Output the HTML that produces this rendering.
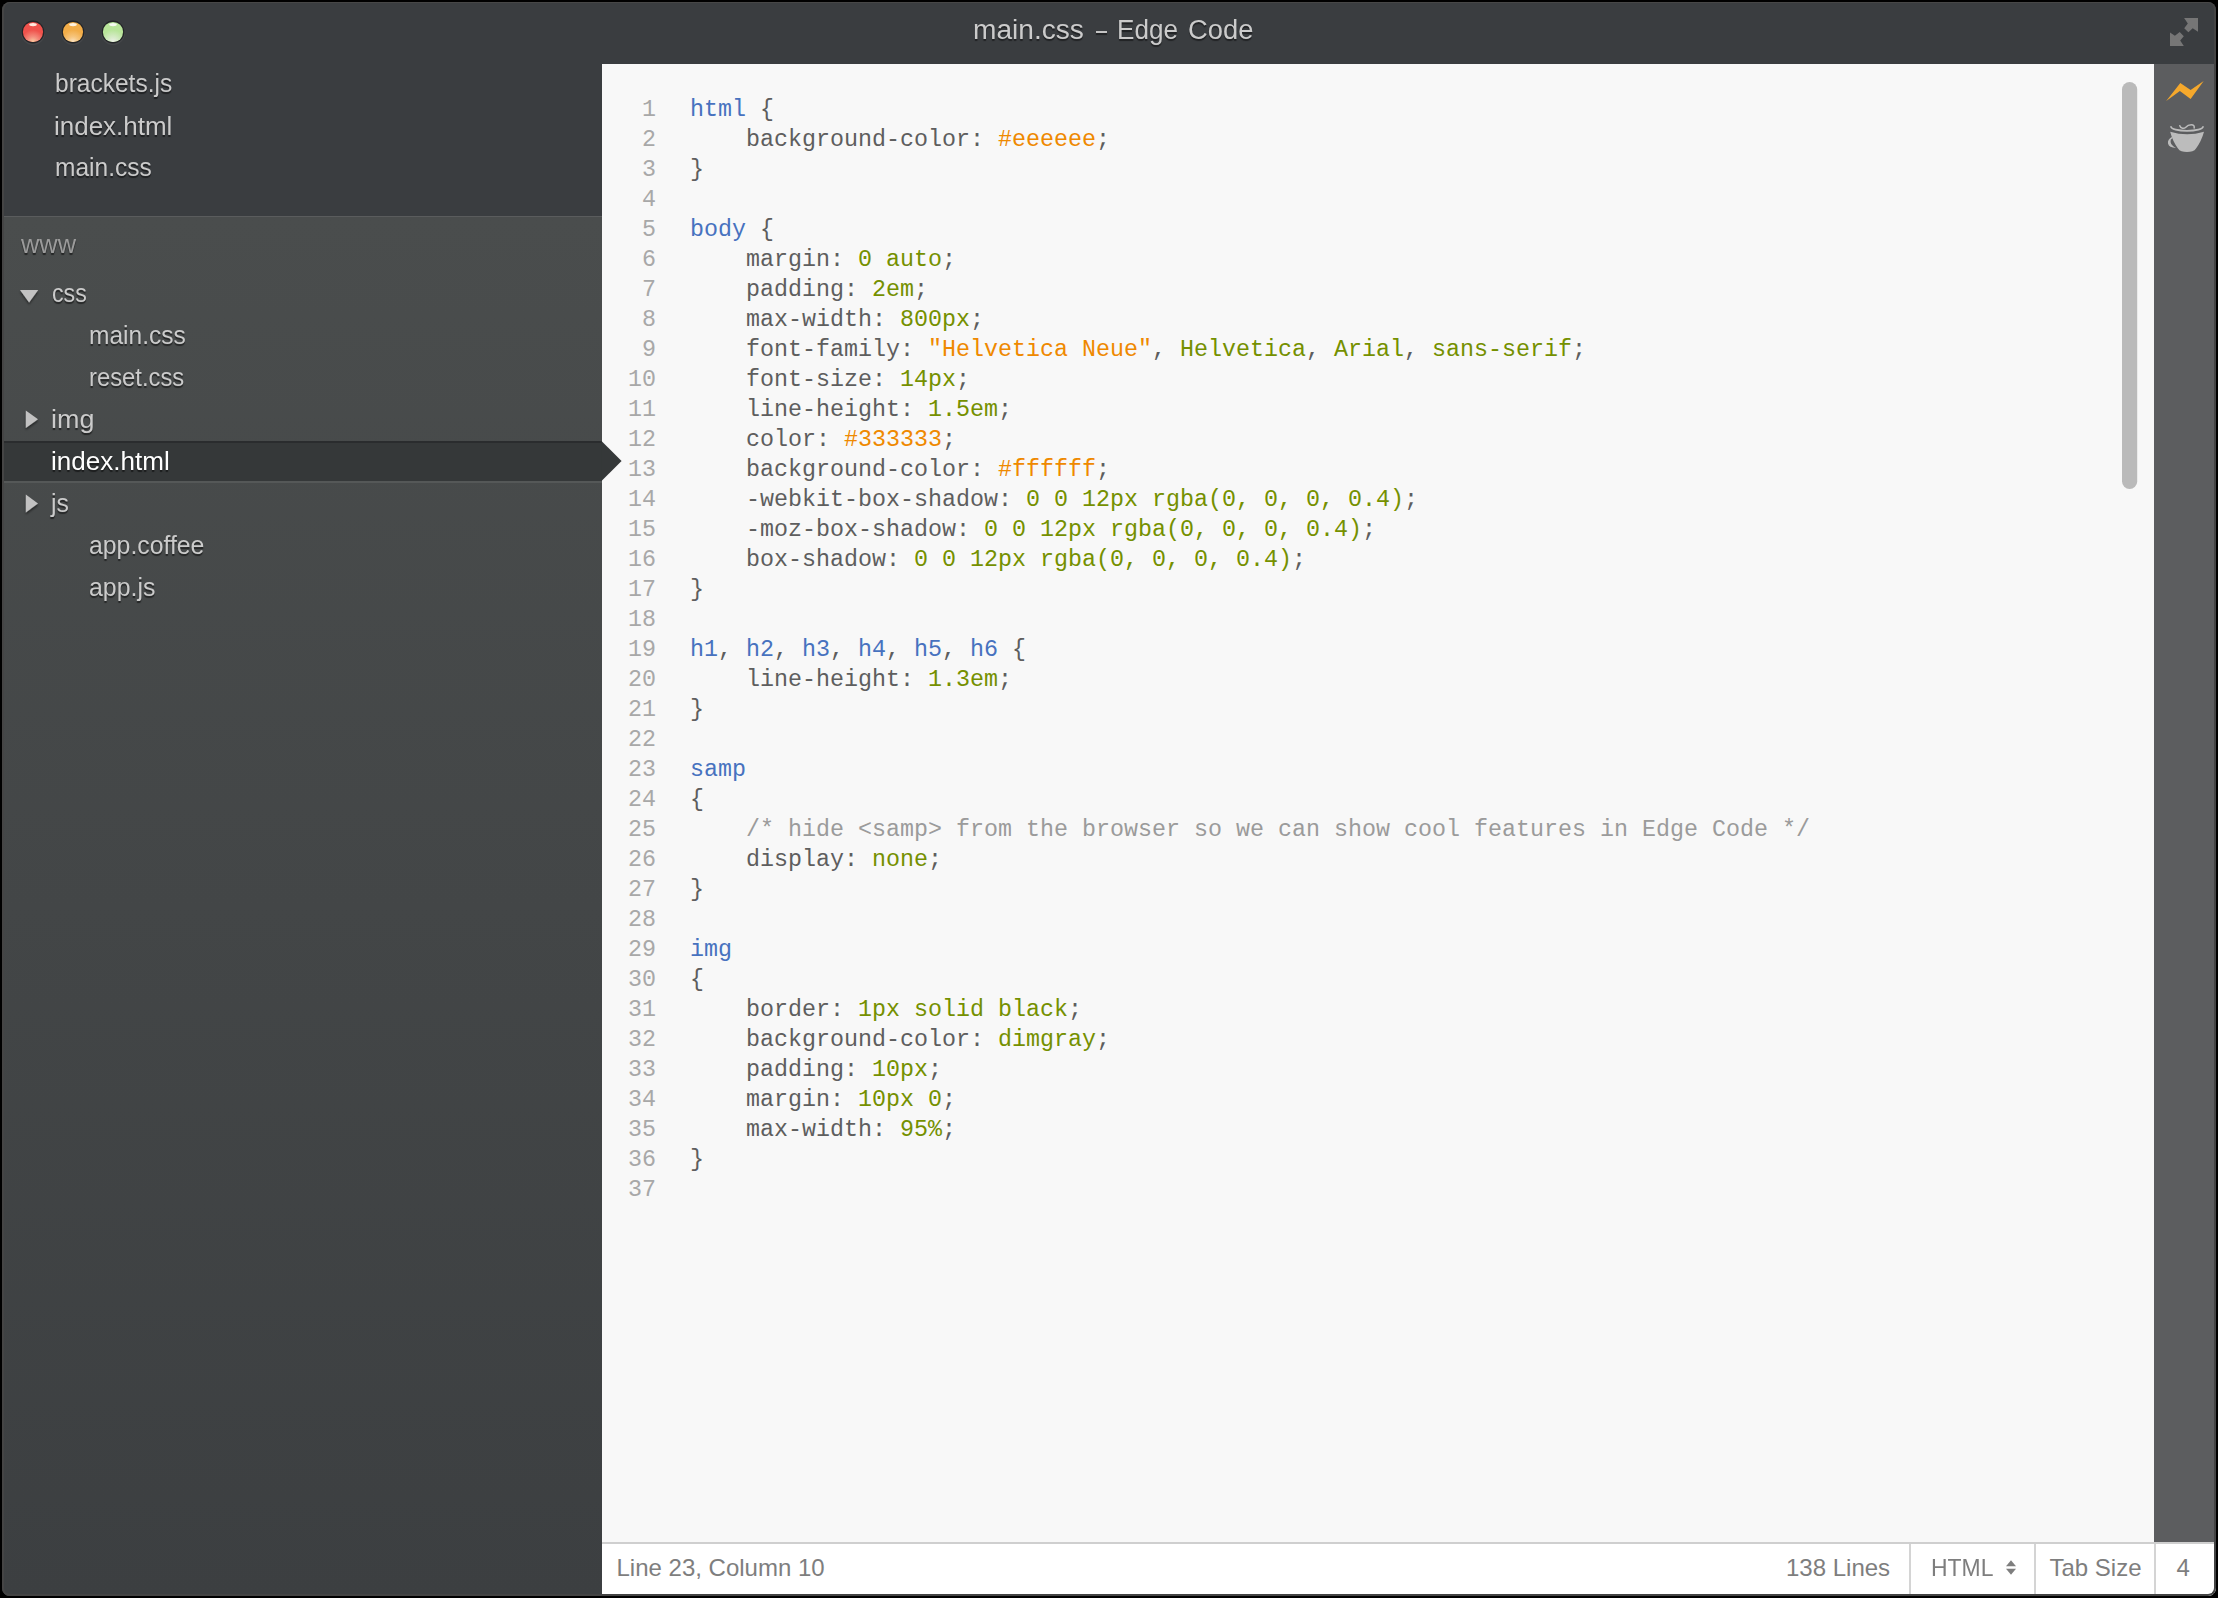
<!DOCTYPE html>
<html><head><meta charset="utf-8">
<style>
html,body{margin:0;padding:0;width:2218px;height:1598px;overflow:hidden;background:#000;position:relative;}
*{box-sizing:border-box;}
.a{position:absolute;}
#win{position:absolute;left:2px;top:2px;width:2214px;height:1594px;border-radius:8px;overflow:hidden;background:#3a3d40;}
#tree{position:absolute;left:0;top:214px;width:600px;height:1380px;background:linear-gradient(#4a4d4d,#3c3f41);border-top:1px solid #5a5c5d;}
.tt{position:absolute;top:14.7px;font-family:"Liberation Sans",sans-serif;font-size:27px;line-height:30px;color:#cbcbcb;text-shadow:0 2px 1px rgba(0,0,0,.45);white-space:nowrap;transform-origin:0 0;}
.si{position:absolute;font-family:"Liberation Sans",sans-serif;font-size:26px;line-height:30px;height:30px;color:#cbcbcb;text-shadow:0 2px 1px rgba(0,0,0,.5);white-space:nowrap;transform-origin:0 0;}
#editor{position:absolute;left:600px;top:62px;width:1552px;height:1480px;background:#f8f8f8;}
#tb{position:absolute;left:2152px;top:62px;width:62px;height:1480px;background:#5c5d5f;}
#status{position:absolute;left:600px;top:1540px;width:1614px;height:54px;background:#fff;border-top:2px solid #cfcfcf;}
#frame{position:absolute;left:2px;top:2px;width:2214px;height:1594px;border-radius:8px;border-right:2px solid #444;border-bottom:2px solid #444;border-top:1px solid #474747;border-left:2px solid #454545;}
.st{position:absolute;font-family:"Liberation Sans",sans-serif;font-size:24px;line-height:30px;height:30px;color:#7e7e7e;white-space:nowrap;transform-origin:0 0;}
.sep{position:absolute;top:1544px;width:2px;height:50px;background:#d4d4d4;}
.code{position:absolute;left:690px;top:95px;font-family:"Liberation Mono",monospace;font-size:23.33px;line-height:30px;color:#5e5e5e;white-space:pre;}
.ln{position:absolute;left:599px;top:95px;width:57px;text-align:right;font-family:"Liberation Mono",monospace;font-size:23.33px;line-height:30px;color:#a8a8a8;white-space:pre;}
.k{color:#4772bf}.n{color:#759000}.s{color:#ef8900}.c{color:#9b9b9b}
#sel{position:absolute;left:4px;top:441px;width:598px;height:40px;background:#353839;border-top:2px solid #2a2c2e;}
#selb{position:absolute;left:4px;top:481px;width:598px;height:2px;background:#555858;}
</style></head><body>
<div id="win">
  <div id="tree"></div>
  <div id="editor"></div>
  <div id="tb"></div>
  <div id="status"></div>
</div>
<div id="frame"></div>
<div class="tt" style="left:973.4px;transform:scaleX(1.041)">main.css</div>
<div class="a" style="left:1095.6px;top:31px;width:11px;height:2.2px;background:#c4c4c4;box-shadow:0 2px 1px rgba(0,0,0,.45)"></div>
<div class="tt" style="left:1117.2px;transform:scaleX(0.967)">Edge</div>
<div class="tt" style="left:1187.5px;transform:scaleX(1.013)">Code</div>
<div id="sel"></div><div id="selb"></div>
<svg class="a" style="left:0;top:0" width="2218" height="1598" viewBox="0 0 2218 1598">
  <defs>
    <filter id="sh" x="-20%" y="-20%" width="140%" height="160%"><feDropShadow dx="0" dy="2" stdDeviation="0.8" flood-color="#000" flood-opacity="0.5"/></filter>
    <radialGradient id="glow33" cx="0.5" cy="1" r="0.6"><stop offset="0" stop-color="#fbd7a6" stop-opacity="1"/><stop offset="0.45" stop-color="#f59a88" stop-opacity="0.8"/><stop offset="1" stop-color="#f59a88" stop-opacity="0"/></radialGradient>
    <radialGradient id="glow73" cx="0.5" cy="1" r="0.6"><stop offset="0" stop-color="#fde9cf" stop-opacity="1"/><stop offset="0.45" stop-color="#f8cb8a" stop-opacity="0.8"/><stop offset="1" stop-color="#f8cb8a" stop-opacity="0"/></radialGradient>
    <radialGradient id="glow113" cx="0.5" cy="1" r="0.6"><stop offset="0" stop-color="#f2f2ee" stop-opacity="1"/><stop offset="0.45" stop-color="#dcecd0" stop-opacity="0.8"/><stop offset="1" stop-color="#dcecd0" stop-opacity="0"/></radialGradient>
  </defs>
  <!-- selection arrow -->
  <polygon points="601.5,441 621.6,461 601.5,481" fill="#353839"/>
  <!-- tree triangles -->
  <polygon points="20,290 38.2,290 29.1,302.4" fill="#c2c2c2" filter="url(#sh)"/>
  <polygon points="25.8,410.5 38,419.2 25.8,428" fill="#c2c2c2" filter="url(#sh)"/>
  <polygon points="25.8,494.6 38,503.5 25.8,512.4" fill="#c2c2c2" filter="url(#sh)"/>
  <!-- traffic lights -->
  <circle cx="33" cy="33" r="12" fill="#4a4c4e" opacity="0.7"/>
  <circle cx="33" cy="32" r="11.4" fill="#232528"/>
  <circle cx="33" cy="32" r="10.1" fill="#ef524c"/>
  <circle cx="33" cy="32" r="10.1" fill="url(#glow33)"/>
  <ellipse cx="33" cy="24.6" rx="3.8" ry="1.6" fill="#fff1e6" opacity="0.95"/>
  <circle cx="73" cy="33" r="12" fill="#4a4c4e" opacity="0.7"/>
  <circle cx="73" cy="32" r="11.4" fill="#232528"/>
  <circle cx="73" cy="32" r="10.1" fill="#f2ad48"/>
  <circle cx="73" cy="32" r="10.1" fill="url(#glow73)"/>
  <ellipse cx="73" cy="24.6" rx="3.8" ry="1.6" fill="#fff6e8" opacity="0.95"/>
  <circle cx="113" cy="33" r="12" fill="#4a4c4e" opacity="0.7"/>
  <circle cx="113" cy="32" r="11.4" fill="#232528"/>
  <circle cx="113" cy="32" r="10.1" fill="#b8e59a"/>
  <circle cx="113" cy="32" r="10.1" fill="url(#glow113)"/>
  <ellipse cx="113" cy="24.6" rx="3.8" ry="1.6" fill="#f8fbf4" opacity="0.95"/>
  <!-- expand icon -->
  <polygon points="2184.1,18 2198,18 2198,31.8 2192.7,28.2 2188.4,32.2 2184.2,28.3 2187.8,23.6" fill="#767676"/>
  <polygon points="2170,32.4 2174.9,35.8 2179.7,32.0 2183.8,36.2 2180.2,40.6 2183.8,46 2170,46" fill="#767676"/>
  <!-- scrollbar -->
  <rect x="2122" y="82" width="15.2" height="407" rx="7.6" fill="#bababa"/>
  <!-- live preview bolt -->
  <polygon points="2166.2,101 2180.3,83.1 2190.6,89.9 2203.7,81 2190.6,98.9 2179.9,91" fill="#f5a82c"/>
  <!-- coffee cup -->
  <path d="M2171,126.8 A16,4.0 0 0 0 2203,126.8" fill="none" stroke="#bcbcbc" stroke-width="1.7" stroke-linecap="round"/>
  <path d="M2179.8,125.8 C2180.6,128.7 2184,129.0 2185.8,127.2 C2187.5,125.2 2189,124.7 2191.3,124.7 C2193.5,124.7 2194.5,125.9 2194.2,128.0" fill="none" stroke="#bcbcbc" stroke-width="1.5" stroke-linecap="round"/>
  <path d="M2170.2,131.8 Q2187,136.8 2204,131.8 Q2201.5,141 2196,148.6 C2194.5,151.2 2191,152 2187,152 C2183,152 2179.5,151.2 2178,148.6 Q2172.5,141 2170.2,131.8 Z" fill="#bcbcbc"/>
  <path d="M2172.6,136.6 Q2167.2,139.5 2168,143.5 Q2169,147.8 2176,147.9 Q2171.3,145.5 2170.7,142.5 Q2170.2,139.3 2172.3,138.6 Z" fill="#bcbcbc"/>
  <!-- status arrows -->
  <polygon points="2006,1566.2 2016,1566.2 2011,1560.2" fill="#7e7e7e"/>
  <polygon points="2006,1568.8 2016,1568.8 2011,1574.8" fill="#7e7e7e"/>
</svg>
<div class="si" style="left:54.5px;top:68.0px;transform:scaleX(0.943)">brackets.js</div>
<div class="si" style="left:54.0px;top:110.5px;transform:scaleX(0.999)">index.html</div>
<div class="si" style="left:54.9px;top:151.6px;transform:scaleX(0.943)">main.css</div>
<div class="si" style="left:21.4px;top:228.5px;transform:scaleX(0.976);color:#9b9b9b">www</div>
<div class="si" style="left:51.9px;top:277.8px;transform:scaleX(0.891)">css</div>
<div class="si" style="left:89.0px;top:320.0px;transform:scaleX(0.944)">main.css</div>
<div class="si" style="left:89.0px;top:361.8px;transform:scaleX(0.915)">reset.css</div>
<div class="si" style="left:51.4px;top:403.8px;transform:scaleX(1.037)">img</div>
<div class="si" style="left:51.4px;top:445.8px;transform:scaleX(1.002);color:#ffffff">index.html</div>
<div class="si" style="left:51.3px;top:488.0px;transform:scaleX(0.952)">js</div>
<div class="si" style="left:89.4px;top:529.9px;transform:scaleX(0.954)">app.coffee</div>
<div class="si" style="left:89.4px;top:572.0px;transform:scaleX(0.957)">app.js</div>
<div class="ln">1
2
3
4
5
6
7
8
9
10
11
12
13
14
15
16
17
18
19
20
21
22
23
24
25
26
27
28
29
30
31
32
33
34
35
36
37</div>
<div class="code"><span class="k">html</span> {
    background-color: <span class="s">#eeeeee</span>;
}

<span class="k">body</span> {
    margin: <span class="n">0 auto</span>;
    padding: <span class="n">2em</span>;
    max-width: <span class="n">800px</span>;
    font-family: <span class="s">"Helvetica Neue"</span>, <span class="n">Helvetica</span>, <span class="n">Arial</span>, <span class="n">sans-serif</span>;
    font-size: <span class="n">14px</span>;
    line-height: <span class="n">1.5em</span>;
    color: <span class="s">#333333</span>;
    background-color: <span class="s">#ffffff</span>;
    -webkit-box-shadow: <span class="n">0 0 12px rgba(0, 0, 0, 0.4)</span>;
    -moz-box-shadow: <span class="n">0 0 12px rgba(0, 0, 0, 0.4)</span>;
    box-shadow: <span class="n">0 0 12px rgba(0, 0, 0, 0.4)</span>;
}

<span class="k">h1</span>, <span class="k">h2</span>, <span class="k">h3</span>, <span class="k">h4</span>, <span class="k">h5</span>, <span class="k">h6</span> {
    line-height: <span class="n">1.3em</span>;
}

<span class="k">samp</span>
{
    <span class="c">/* hide &lt;samp&gt; from the browser so we can show cool features in Edge Code */</span>
    display: <span class="n">none</span>;
}

<span class="k">img</span>
{
    border: <span class="n">1px solid black</span>;
    background-color: <span class="n">dimgray</span>;
    padding: <span class="n">10px</span>;
    margin: <span class="n">10px 0</span>;
    max-width: <span class="n">95%</span>;
}
</div>
<div class="st" style="left:616.5px;top:1553px;transform:scaleX(1.000)">Line 23, Column 10</div>
<div class="st" style="left:1786.0px;top:1553px;transform:scaleX(1.000)">138 Lines</div>
<div class="sep" style="left:1909px"></div>
<div class="st" style="left:1931.2px;top:1553px;transform:scaleX(0.955)">HTML</div>
<div class="sep" style="left:2034px"></div>
<div class="st" style="left:2049.5px;top:1553px;transform:scaleX(1.000)">Tab Size</div>
<div class="sep" style="left:2154px"></div>
<div class="st" style="left:2176.6px;top:1553px;transform:scaleX(1.000)">4</div>
</body></html>
